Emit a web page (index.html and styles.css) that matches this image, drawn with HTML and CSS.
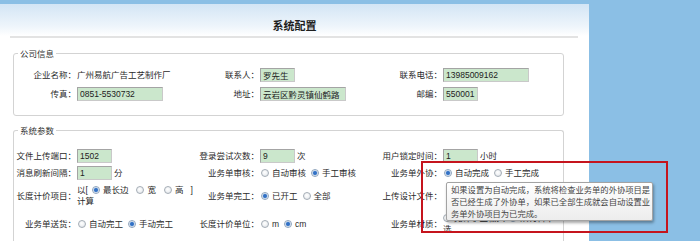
FILE: index.html
```html
<!DOCTYPE html>
<html lang="zh-CN">
<head>
<meta charset="utf-8">
<title>系统配置</title>
<link rel="stylesheet" href="styles.css">
</head>
<body>
<div class="panel">
  <div class="head"><h1 class="title">系统配置</h1></div>
  <div class="rule"></div>

  <fieldset class="group g1">
    <legend>公司信息</legend>
    <div class="row h19">
      <span class="lab">企业名称：</span>
      <span class="val txt">广州易航广告工艺制作厂</span>
      <span class="lab">联系人：</span>
      <span class="val"><input class="field n" value="罗先生" readonly></span>
      <span class="lab">联系电话：</span>
      <span class="val"><input class="field w" value="13985009162" readonly></span>
    </div>
    <div class="row h19">
      <span class="lab">传真：</span>
      <span class="val"><input class="field w" value="0851-5530732" readonly></span>
      <span class="lab">地址：</span>
      <span class="val"><input class="field w" value="云岩区黔灵镇仙鹤路" readonly></span>
      <span class="lab">邮编：</span>
      <span class="val"><input class="field n" value="550001" readonly></span>
    </div>
  </fieldset>

  <fieldset class="group g2">
    <legend>系统参数</legend>
    <div class="row h17">
      <span class="lab">文件上传端口：</span>
      <span class="val"><input class="field n" value="1502" readonly></span>
      <span class="lab">登录尝试次数：</span>
      <span class="val"><input class="field n" value="9" readonly><span class="unit">次</span></span>
      <span class="lab">用户锁定时间：</span>
      <span class="val"><input class="field n" value="1" readonly><span class="unit">小时</span></span>
    </div>
    <div class="row h17">
      <span class="lab">消息刷新间隔：</span>
      <span class="val"><input class="field n" value="1" readonly><span class="unit">分</span></span>
      <span class="lab">业务单审核：</span>
      <span class="val opts"><span class="opt"><i class="rb"></i>自动审核</span><span class="opt"><i class="rb on"></i>手工审核</span></span>
      <span class="lab">业务单外协：</span>
      <span class="val opts"><span class="opt"><i class="rb on"></i>自动完成</span><span class="opt"><i class="rb"></i>手工完成</span></span>
    </div>
    <div class="row h29">
      <span class="lab">长度计价项目：</span>
      <span class="val stack"><span class="line wide">以[<span class="opt first"><i class="rb on"></i>最长边</span><span class="opt"><i class="rb"></i>宽</span><span class="opt"><i class="rb"></i>高</span><span class="close">]</span></span><span class="line">计算</span></span>
      <span class="lab">业务单完工：</span>
      <span class="val opts"><span class="opt"><i class="rb on"></i>已开工</span><span class="opt"><i class="rb"></i>全部</span></span>
      <span class="lab">上传设计文件：</span>
      <span class="val"></span>
    </div>
    <div class="row h28">
      <span class="lab">业务单送货：</span>
      <span class="val opts"><span class="opt"><i class="rb"></i>自动完工</span><span class="opt"><i class="rb on"></i>手动完工</span></span>
      <span class="lab">长度计价单位：</span>
      <span class="val opts"><span class="opt"><i class="rb"></i>m</span><span class="opt"><i class="rb on"></i>cm</span></span>
      <span class="lab">业务单材质：</span>
      <span class="val stack"><span class="line"><span class="opt"><i class="rb"></i>允许手工输入</span><span class="opt"><i class="rb on"></i>从材料中</span></span><span class="line">选</span></span>
    </div>
  </fieldset>
</div>

<div class="tip">如果设置为自动完成，系统将检查业务单的外协项目是<br>否已经生成了外协单，如果已全部生成就会自动设置业<br>务单外协项目为已完成。</div>
<div class="mark"></div>
</body>
</html>
```

FILE: styles.css
```css
html, body {
  margin: 0;
  padding: 0;
}
body {
  position: relative;
  height: 241px;
  overflow: hidden;
  background: #8bbfe5;
  font-family: "Liberation Sans", "Noto Sans CJK SC", sans-serif;
  font-size: 8.5px;
  color: #2a2a2a;
}

.panel {
  width: 589px;
  height: 237px;
  margin-top: 4px;
  background: #fff;
}

.head {
  height: 32px;
  box-sizing: border-box;
  padding-top: 10px;
  background: linear-gradient(#d3e5f5, #eef5fb 70%, #fff);
}
.title {
  margin: 0;
  line-height: 22px;
  font-size: 11px;
  font-weight: bold;
  text-align: center;
  color: #1e1e1e;
  font-family: "Noto Sans CJK SC", sans-serif;
}

.rule {
  height: 2px;
  margin: 0 11px 0 10px;
  background: #e3e3e3;
}

.group {
  box-sizing: border-box;
  width: 551px;
  margin: 0 0 0 13px;
  padding: 6px 0 12px 0;
  border: 1px solid #d3d3d3;
  border-radius: 3px;
  min-width: 0;
}
.g1 { margin-top: 9px; }
.g2 { margin-top: 8px; padding-top: 11px; border-bottom: 0; }

.group legend {
  margin-left: 4px;
  padding: 0 2px;
  line-height: 12px;
  color: #333;
  font-family: "Noto Sans CJK SC", sans-serif;
}

.row {
  display: grid;
  grid-template-columns: 62px 116px 67px 121px 62px 121px;
  align-items: center;
}
.h19 { height: 19px; }
.h17 { height: 17px; }
.h29 { height: 29px; }
.h28 { height: 28px; }

.lab {
  text-align: right;
  white-space: nowrap;
  line-height: 12px;
  color: #2a2a2a;
}
.val {
  line-height: 12px;
  white-space: nowrap;
}
.txt { padding-left: 1px; }

.field {
  box-sizing: border-box;
  height: 14px;
  margin: 0 0 0 1px;
  padding: 0 2px;
  border: 1px solid #a4a4a4;
  border-right-color: #c9c9c9;
  border-bottom-color: #c9c9c9;
  background: #cbe7cc;
  font-family: "Liberation Sans", "Noto Sans CJK SC", sans-serif;
  font-size: 8.5px;
  color: #222;
  vertical-align: baseline;
  outline: none;
}
.field.n { width: 35px; }
.field.w { width: 86px; }

.unit { margin-left: 2px; }

.opts { padding-left: 2px; }
.opt { white-space: nowrap; }
.opt + .opt { margin-left: 5px; }

.stack {
  display: flex;
  flex-direction: column;
  line-height: 11px;
  padding-left: 1px;
}
.stack .opt + .opt { margin-left: 4px; }
.stack .line { white-space: nowrap; }
.wide .opt.first { margin-left: 4px; }
.wide .opt + .opt { margin-left: 8px; }
.wide .close { margin-left: 7px; }

.rb {
  display: inline-block;
  box-sizing: border-box;
  width: 8px;
  height: 8px;
  margin-right: 3px;
  border: 1px solid #a5adb6;
  border-radius: 50%;
  vertical-align: -1px;
  background: radial-gradient(circle at 45% 40%, #ffffff 0, #f1f3f5 45%, #d7dde3 100%);
}
.rb.on {
  border-color: #8ea3bb;
  background: radial-gradient(circle, #2a66bd 0, #3f7ccb 1.6px, #a9c4e6 2.3px, #f6f8fb 2.8px, #dfe5ec 4px);
}

.tip {
  position: absolute;
  left: 446px;
  top: 182px;
  width: 197px;
  padding: 0 4px 1px 4px;
  border: 1px solid #a3a3a3;
  border-radius: 2px;
  background: linear-gradient(#ffffff, #ededed);
  box-shadow: 1px 2px 3px rgba(0, 0, 0, 0.35);
  font-family: "Noto Sans CJK SC", sans-serif;
  font-size: 8.3px;
  line-height: 12px;
  color: #454545;
  white-space: nowrap;
  z-index: 2;
}

.mark {
  position: absolute;
  left: 421px;
  top: 161px;
  width: 247px;
  height: 72px;
  box-sizing: border-box;
  border: 2px solid #c5141d;
  z-index: 3;
}
```
